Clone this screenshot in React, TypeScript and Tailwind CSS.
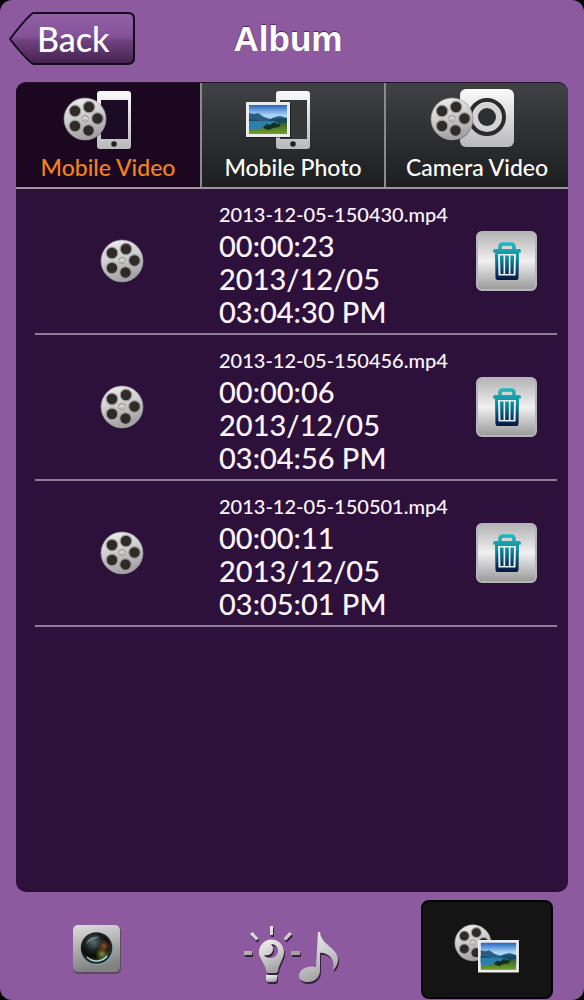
import type { ReactNode } from 'react';

type VideoItem = {
  name: string;
  duration: string;
  date: string;
  time: string;
};

const videos: VideoItem[] = [
  { name: '2013-12-05-150430.mp4', duration: '00:00:23', date: '2013/12/05', time: '03:04:30 PM' },
  { name: '2013-12-05-150456.mp4', duration: '00:00:06', date: '2013/12/05', time: '03:04:56 PM' },
  { name: '2013-12-05-150501.mp4', duration: '00:00:11', date: '2013/12/05', time: '03:05:01 PM' },
];

// Gradients shared by all the icons on the page
const IconDefs = () => (
  <svg className="absolute h-0 w-0" aria-hidden="true">
    <defs>
      <linearGradient id="metal" x1="0" y1="0" x2="0.3" y2="1">
        <stop offset="0" stopColor="#f2f2f2" />
        <stop offset="0.5" stopColor="#d0d0d0" />
        <stop offset="1" stopColor="#a5a2a6" />
      </linearGradient>
      <linearGradient id="plate" x1="0" y1="0" x2="0" y2="1">
        <stop offset="0" stopColor="#fafafa" />
        <stop offset="1" stopColor="#b9b9bb" />
      </linearGradient>
      <linearGradient id="body" x1="0" y1="0" x2="0.2" y2="1">
        <stop offset="0" stopColor="#dedede" />
        <stop offset="1" stopColor="#808080" />
      </linearGradient>
      <linearGradient id="sky" x1="0" y1="0" x2="0" y2="1">
        <stop offset="0" stopColor="#2464c0" />
        <stop offset="0.35" stopColor="#a9d4f2" />
      </linearGradient>
      <linearGradient id="grass" x1="0" y1="0" x2="0" y2="1">
        <stop offset="0" stopColor="#31572b" />
        <stop offset="1" stopColor="#73a02c" />
      </linearGradient>
      <linearGradient id="back" x1="0" y1="0" x2="0" y2="1">
        <stop offset="0" stopColor="#9160a5" />
        <stop offset="0.45" stopColor="#85529a" />
        <stop offset="0.55" stopColor="#6f417f" />
        <stop offset="1" stopColor="#41224c" />
      </linearGradient>
      <linearGradient id="bin" gradientUnits="userSpaceOnUse" x1="0" y1="0" x2="0" y2="38">
        <stop offset="0" stopColor="#20bcc2" />
        <stop offset="0.4" stopColor="#118c9f" />
        <stop offset="0.75" stopColor="#0a3f69" />
        <stop offset="1" stopColor="#071640" />
      </linearGradient>
      <radialGradient id="lens" cx="0.4" cy="0.3" r="0.8">
        <stop offset="0" stopColor="#5f7072" />
        <stop offset="0.35" stopColor="#1a2424" />
        <stop offset="0.6" stopColor="#080a08" />
        <stop offset="1" stopColor="#55683a" />
      </radialGradient>
      <radialGradient id="flare">
        <stop offset="0" stopColor="#a4522a" />
        <stop offset="1" stopColor="#6c3a14" stopOpacity="0" />
      </radialGradient>
      <radialGradient id="flareGreen">
        <stop offset="0" stopColor="#8f9440" />
        <stop offset="1" stopColor="#5a6a1c" stopOpacity="0" />
      </radialGradient>
    </defs>
  </svg>
);

// Film reel, 44 x 44
const Reel = () => (
  <g>
    <circle cx="22" cy="23" r="21" fill="#000" opacity="0.45" />
    <circle cx="22" cy="22" r="21" fill="url(#metal)" stroke="#9b989b" strokeWidth="0.7" />
    <g fill="#302b28" stroke="#a29f9f" strokeWidth="1.2">
      <circle cx="12" cy="14" r="5.8" />
      <circle cx="26" cy="10" r="5.8" />
      <circle cx="34.5" cy="21.5" r="5.8" />
      <circle cx="25.5" cy="33.5" r="5.8" />
      <circle cx="12" cy="29" r="5.8" />
    </g>
    <circle cx="22" cy="21.5" r="3.4" fill="#bbb" stroke="#999" strokeWidth="0.8" />
    <path d="M19.5 22.5q2.5-4 5 0" fill="none" stroke="#eee" />
  </g>
);

// Framed landscape, 44 x 35
const Landscape = () => (
  <g>
    <path d="M0 1h45v35H0z" fill="#000" opacity="0.4" />
    <path d="M0 0h44v35H0z" fill="#ececec" />
    <path d="M3 3h38v29H3z" fill="url(#sky)" />
    <path d="M3 11l5 1 4-1 6 4 6 2 5-2 5-1 7 2v9H3z" fill="#2b5c82" />
    <path d="M3 17l8 1 7 2 9-3 14-1v8H3z" fill="#174a5f" />
    <path d="M3 19h25l8 4-8 4H3z" fill="#2a80ac" />
    <path d="M3 27l9 0 10-3 8-1 11-3v12H3z" fill="url(#grass)" />
    <path d="M17 25l4-3 3 1 4-3 3 2 4-1-2 4-6 1-4 2-4-1z" fill="#15301f" />
  </g>
);

// Handset with home button, 34 x 58
const Phone = ({ screen }: { screen: string }) => (
  <g>
    <rect width="34" height="58" rx="3" fill="url(#plate)" />
    <path d="M4 9h27v39H4z" fill={screen} />
    <circle cx="17" cy="53" r="2.8" fill="#222" />
  </g>
);

const MobileVideoIcon = () => (
  <svg viewBox="0 0 100 62" className="h-[62px] w-[100px]" aria-hidden="true">
    <g transform="translate(39 2)"><Phone screen="#1b0b25" /></g>
    <g transform="translate(5 8)"><Reel /></g>
  </svg>
);

const MobilePhotoIcon = () => (
  <svg viewBox="0 0 100 62" className="h-[62px] w-[100px]" aria-hidden="true">
    <g transform="translate(33 2)"><Phone screen="#35373a" /></g>
    <g transform="translate(3 13)"><Landscape /></g>
  </svg>
);

const CameraVideoIcon = () => (
  <svg viewBox="0 0 100 62" className="h-[62px] w-[100px]" aria-hidden="true">
    <rect x="33" y="0" width="54" height="58" rx="6" fill="url(#plate)" />
    <circle cx="60" cy="28" r="17" fill="none" stroke="#2a2b2d" strokeWidth="4" />
    <circle cx="60" cy="28" r="11.5" fill="none" stroke="#d3d3d4" strokeWidth="5" />
    <circle cx="60" cy="28" r="9" fill="#2d2e30" />
    <g transform="translate(3 8)"><Reel /></g>
  </svg>
);

const TrashIcon = () => (
  <svg viewBox="0 0 28 38" className="h-[38px] w-7" aria-hidden="true">
    <path d="M7 8V5q0-3 3-3h8q3 0 3 3v3" fill="none" stroke="url(#bin)" strokeWidth="3.5" />
    <path d="M1.500 7h25q1.500 0 1.500 3.500h-2L25.500 36q0 2-2 2h-19q-2 0-2-2L2 10.500H0Q0 7 1.500 7z" fill="url(#bin)" />
    <path d="M5 12h18l-.5 21.500h-17z" fill="#e7eeee" />
    <path d="M7 13.500h3.500v18.500H7.500zM12.200 13.500h3.600v18.500h-3.600zM17.500 13.500H21l-.5 18.500h-3z" fill="url(#bin)" />
  </svg>
);

const CameraIcon = () => (
  <svg viewBox="0 0 50 50" className="h-[50px] w-[50px]" aria-hidden="true">
    <rect x="1" y="2" width="48" height="48" rx="5" fill="#5b4a60" />
    <rect x="1" y="1" width="47" height="47" rx="5" fill="url(#body)" />
    <circle cx="25.5" cy="25" r="16" fill="#7fa3ad" />
    <circle cx="24.5" cy="24" r="15" fill="url(#lens)" stroke="#222" strokeWidth="1.5" />
    <circle cx="32" cy="22" r="6.5" fill="url(#flare)" />
    <circle cx="30" cy="30" r="7" fill="url(#flareGreen)" />
    <path d="M15 33a13.500 13.500 0 0 0 20-1" fill="none" stroke="#a9d6d8" strokeWidth="1.6" />
    <path d="M14 20q4-9 14-7-8 2-14 7z" fill="#9fb0b0" opacity="0.6" />
  </svg>
);

const LightMusicShape = () => (
  <>
    <path d="M26 1h3v9h-3zM0 26h8v4H0zM47 26h9v4h-9zM6 9l2.500-2 6 6.500-2.500 2zM48 9l-2.500-2-6 6.500 2.500 2z" />
    <path
      fillRule="evenodd"
      d="M27.500 14.500A12.500 12.500 0 0 0 16 32l5.500 11q.5 5 2.500 5h8q2 0 2.500-5L39 32a12.500 12.500 0 0 0-11.500-17.500zM27 19c9 0 10 14-1 14-3 0-5-1-6-3 7 2 12-5 7-11z"
    />
    <path d="M22 50h11v4q0 3-3 3h-5q-3 0-3-3z" />
    <path d="M74 7h2q1 8 9 14 9 7 9 13 0 7-5 11 2-11-5-15-5-3-8-2v17c0 6-4 12-12 12-5 0-9-2-9-6 0-7 9-11 17-9z" />
  </>
);

const LightMusicIcon = () => (
  <svg viewBox="0 0 98 62" className="h-[62px] w-[98px]" aria-hidden="true">
    <g transform="translate(2 2)" fill="#35203d"><LightMusicShape /></g>
    <g transform="translate(1 0)" fill="url(#metal)"><LightMusicShape /></g>
  </svg>
);

const AlbumIcon = () => (
  <svg viewBox="0 0 66 50" className="h-[50px] w-[66px]" aria-hidden="true">
    <g transform="scale(0.86)"><Reel /></g>
    <g transform="translate(24 16) scale(0.93)"><Landscape /></g>
  </svg>
);

type TabProps = {
  label: string;
  icon: ReactNode;
  active?: boolean;
};

const Tab = ({ label, icon, active }: TabProps) => (
  <button
    type="button"
    role="tab"
    aria-selected={!!active}
    className={`flex min-w-0 flex-col items-center pt-1.5 ${
      active
        ? 'bg-[#1b0820] text-[#f58220]'
        : 'border-l-2 border-[#8b8b8e] bg-linear-to-b from-[#404245] to-[#1d1e20] text-white'
    }`}
  >
    {icon}
    <span className="text-[23px] leading-8 whitespace-nowrap">{label}</span>
  </button>
);

const VideoRow = ({ name, duration, date, time }: VideoItem) => (
  <li className="flex items-center border-b-2 border-[#8f7d98]">
    <div className="flex w-1/3 justify-center">
      <svg viewBox="0 0 44 44" className="h-11 w-11" aria-hidden="true"><Reel /></svg>
    </div>
    <div className="flex-1 pt-2.5 pb-[5px] pl-2.5 whitespace-nowrap text-[#fdf5ff]">
      <p className="text-xl leading-[30px]">{name}</p>
      <p className="text-[29px] leading-[33px]">{duration}</p>
      <p className="text-[29px] leading-[33px]">{date}</p>
      <p className="text-[29px] leading-[33px]">{time}</p>
    </div>
    <button
      type="button"
      aria-label={`Delete ${name}`}
      className="mr-5 flex h-[60px] w-[61px] items-center justify-center rounded-md border-2 border-[#b7b5b9] bg-linear-to-b from-[#b5b5b5] via-[#f1f1f1] via-50% to-[#9c9c9c]"
    >
      <TrashIcon />
    </button>
  </li>
);

const App = () => {
  return (
    <div className="min-h-screen bg-black font-['Lato',sans-serif] font-medium">
      <IconDefs />
      <div className="flex min-h-screen flex-col rounded-xl bg-[#8d5a9f]">
        <header className="grid h-[82px] grid-cols-[1fr_auto_1fr] items-center pr-2 pb-1">
          <button type="button" className="relative ml-[9px] h-[54px] w-[127px] text-left text-white">
            <svg viewBox="0 0 127 54" className="absolute inset-0 h-full w-full" aria-hidden="true">
              <path d="M24 2h95q6 0 6 6v39q0 6-6 6H24Q17 51 1 28 17 6 24 2z" fill="#a68eae" />
              <path
                d="M24 1h95q6 0 6 6v39q0 6-6 6H24Q17 48 1 27 17 6 24 1z"
                fill="url(#back)"
                stroke="#170a1c"
                strokeWidth="2"
              />
            </svg>
            <span className="relative block pl-7 text-[34px] leading-[52px]">Back</span>
          </button>
          <h1 className="font-['Liberation_Sans',sans-serif] text-[35px] leading-10 font-bold text-white text-shadow-[0_-1px_1px_#4b2858]">
            Album
          </h1>
        </header>

        <main className="mx-4 flex-1 overflow-hidden rounded-[10px] border-t border-[#241229] bg-[#2d113b]">
          <div role="tablist" className="grid h-[106px] grid-cols-3 border-b-2 border-[#9b989d]">
            <Tab label="Mobile Video" icon={<MobileVideoIcon />} active />
            <Tab label="Mobile Photo" icon={<MobilePhotoIcon />} />
            <Tab label="Camera Video" icon={<CameraVideoIcon />} />
          </div>
          <ul className="mr-[11px] ml-[19px]">
            {videos.map((video) => (
              <VideoRow key={video.name} {...video} />
            ))}
          </ul>
        </main>

        <nav className="grid h-[108px] grid-cols-3 items-center justify-items-center pt-1.5">
          <button type="button" aria-label="Camera">
            <CameraIcon />
          </button>
          <button type="button" aria-label="Light and music" className="pt-3.5">
            <LightMusicIcon />
          </button>
          <button
            type="button"
            aria-label="Album"
            aria-current="page"
            className="flex h-[99px] w-[132px] items-center justify-center rounded-lg border-2 border-black bg-[#141414]"
          >
            <AlbumIcon />
          </button>
        </nav>
      </div>
    </div>
  );
};

export default App;
